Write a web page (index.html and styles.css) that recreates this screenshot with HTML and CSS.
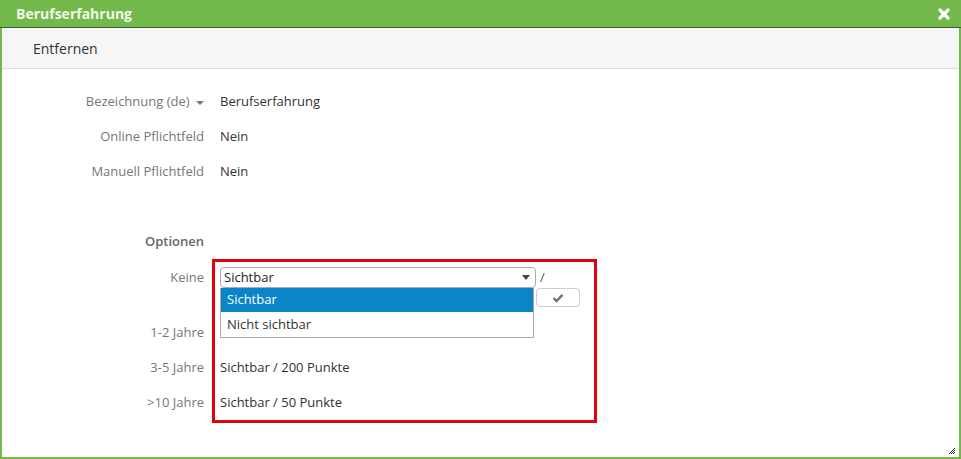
FILE: index.html
```html
<!DOCTYPE html>
<html lang="de">
<head>
    <meta charset="UTF-8">
    <title>Berufserfahrung</title>
    <link rel="stylesheet" href="styles.css">
</head>
<body>
    <div class="modal">
        <header class="modal-title">
            <h1>Berufserfahrung</h1>
            <span class="close">
                <svg width="12" height="12" viewBox="0 0 12 12"><path d="M2 2 L10 10 M10 2 L2 10" stroke="#fff" stroke-width="3.2" stroke-linecap="round"/></svg>
            </span>
        </header>
        <div class="toolbar">
            <span class="tool">Entfernen</span>
        </div>

        <div class="details">
            <div class="label">Bezeichnung (de) <span class="caret"></span></div>
            <div class="value">Berufserfahrung</div>
            <div class="label">Online Pflichtfeld</div>
            <div class="value">Nein</div>
            <div class="label">Manuell Pflichtfeld</div>
            <div class="value">Nein</div>
        </div>

        <div class="options">
            <div class="label heading">Optionen</div>
            <div class="value"></div>

            <div class="label edit-label">Keine</div>
            <div class="value edit-value">
                <div class="select-line">
                    <div class="select">
                        <span>Sichtbar</span>
                        <span class="arrow"></span>
                    </div>
                    <span class="slash">/</span>
                </div>
                <div class="button-line">
                    <button class="ok">
                        <svg width="12" height="10" viewBox="0 0 12 10"><path d="M1.5 5 L4.5 8 L10.5 1.8" fill="none" stroke="#707070" stroke-width="2.4"/></svg>
                    </button>
                </div>
                <ul class="dropdown">
                    <li class="active">Sichtbar</li>
                    <li>Nicht sichtbar</li>
                </ul>
            </div>

            <div class="label">1-2 Jahre</div>
            <div class="value"></div>
            <div class="label">3-5 Jahre</div>
            <div class="value">Sichtbar / 200 Punkte</div>
            <div class="label">&gt;10 Jahre</div>
            <div class="value">Sichtbar / 50 Punkte</div>

            <div class="highlight"></div>
        </div>

        <span class="resize">
            <svg width="8" height="8" viewBox="0 0 8 8"><path d="M7 1 L1 7 M7 3 L3 7 M7 5 L5 7" stroke="#333" stroke-width="1"/></svg>
        </span>
    </div>
</body>
</html>
```

FILE: styles.css
```css
* {
    box-sizing: border-box;
}

html, body {
    margin: 0;
    padding: 0;
    height: 100%;
}

body {
    font-family: "Open Sans", "Liberation Sans", sans-serif;
    font-size: 13px;
    color: #333;
    background: #fff;
}

.modal {
    position: relative;
    height: 459px;
    border: 2px solid #72b84a;
    border-top: none;
    background: #fff;
}

.modal-title {
    display: flex;
    justify-content: space-between;
    align-items: center;
    height: 28px;
    margin: 0 -2px;
    padding: 0 11px 0 16px;
    background: #72b84a;
    border-bottom: 1px solid #3d5f2a;
}

.modal-title h1 {
    margin: 0;
    font-size: 14px;
    font-weight: 700;
    color: #f1f8ea;
}

.close {
    display: flex;
    margin-top: 1px;
}

.toolbar {
    height: 41px;
    padding: 0 0 0 31px;
    display: flex;
    align-items: center;
    background: #f6f6f6;
    border-bottom: 1px solid #dedede;
}

.tool {
    font-size: 14px;
    color: #333;
}

.details, .options {
    display: grid;
    grid-template-columns: 202px 1fr;
    column-gap: 16px;
}

.details {
    padding-top: 15px;
    padding-bottom: 35px;
}

.label, .value {
    line-height: 35px;
    height: 35px;
}

.label {
    text-align: right;
    color: #777;
}

.caret {
    display: inline-block;
    margin-left: 3px;
    vertical-align: middle;
    border-top: 4px solid #777;
    border-left: 4px solid transparent;
    border-right: 4px solid transparent;
}

.heading {
    font-weight: 600;
    color: #666;
}

.options {
    position: relative;
}

.edit-label {
    height: 56px;
    line-height: 20px;
    padding-top: 8px;
}

.edit-value {
    position: relative;
    height: 56px;
    padding-top: 8px;
    line-height: normal;
}

.select-line {
    display: flex;
    align-items: center;
    height: 20px;
}

.select {
    width: 316px;
    height: 21px;
    display: flex;
    justify-content: space-between;
    align-items: center;
    padding: 0 5px 0 3px;
    border: 1px solid #aaa;
    border-radius: 4px;
    background: #fff;
    color: #222;
}

.arrow {
    border-top: 5px solid #444;
    border-left: 4px solid transparent;
    border-right: 4px solid transparent;
}

.slash {
    margin-left: 4px;
    color: #555;
}

.button-line {
    display: flex;
    padding-left: 316px;
    margin-top: 1px;
}

.ok {
    width: 44px;
    height: 19px;
    display: flex;
    justify-content: center;
    align-items: center;
    padding: 0;
    border: 1px solid #ccc;
    border-radius: 4px;
    background: #fff;
}

.dropdown {
    position: absolute;
    top: 29px;
    left: 0;
    width: 314px;
    margin: 0;
    padding: 0;
    list-style: none;
    background: #fff;
    border: 1px solid #aaa;
    border-top: none;
}

.dropdown li {
    height: 25px;
    line-height: 25px;
    padding-left: 6px;
    color: #333;
}

.dropdown li.active {
    height: 24px;
    line-height: 23px;
    background: #0a85c8;
    color: #fff;
}

.highlight {
    position: absolute;
    left: 210px;
    top: 35px;
    width: 385px;
    height: 164px;
    border: 3px solid #e3000f;
}

.resize {
    position: absolute;
    right: 3px;
    bottom: 2px;
    display: flex;
}
```
